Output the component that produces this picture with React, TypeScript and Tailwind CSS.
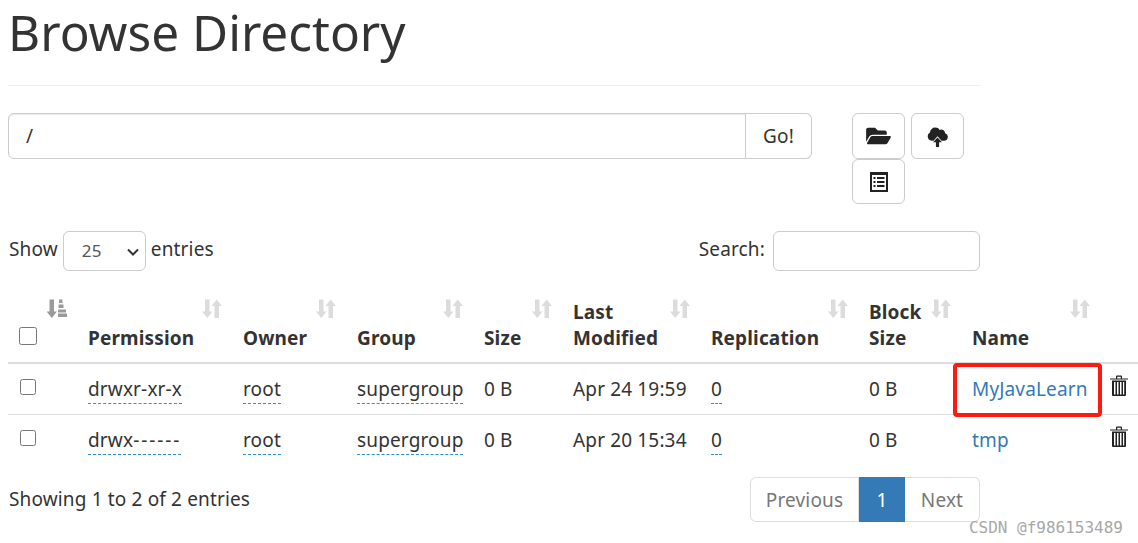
import type { ReactNode } from 'react';
import { FaFolderOpen } from 'react-icons/fa';

const font = "[font-family:'Noto_Sans',sans-serif]";

function SortIcon({ active }: { active?: boolean }) {
	return (
		<svg viewBox="0 0 20 20" className="absolute top-[8px] right-[13px] h-[21px] w-5" fill={active ? '#9a9a9a' : '#dcdcdc'}>
			{active ? (
				<>
					<path d="M2.500 1h4.500v12h3l-5.200 6.500L-.5 13h3z" />
					<path d="M12 1h3.500v3.500H12zM11.500 6h5v3.500h-5zM11 11h8v3h-8zM11 15h9v3.500h-9z" />
				</>
			) : (
				<>
					<path d="M3 1h4.500v12h3l-5.200 6.500L0 13h3z" />
					<path d="M12.500 19.500H17V7.500h3L14.700 1 9.500 7.500h3z" />
				</>
			)}
		</svg>
	);
}

function CloudUpload() {
	return (
		<svg viewBox="0 0 20 20" className="h-[21px] w-[21px]" fill="#222">
			<path d="M4.500 14A4.200 4.200 0 0 1 2.800 6.200 5 5 0 0 1 8 1.500c1.700 0 3.100.8 3.900 2.200A3.800 3.800 0 0 1 17.300 6.800 3.700 3.700 0 0 1 16 14h-2.200L10 9.800 6.200 14z" />
			<path d="M10 11l4.200 4.500h-2.700V20h-3v-4.500H5.800z" />
		</svg>
	);
}

function ListAlt() {
	return (
		<svg viewBox="0 0 18 20" className="h-5 w-[18px]">
			<path fill="#222" fillRule="evenodd" d="M0 0h18v20H0zM2 3v15h14V3z" />
			<path fill="#222" d="M3.500 5h2v2h-2zM7 5h7.500v2H7zM3.500 9h2v2h-2zM7 9h7.500v2H7zM3.500 13h2v2h-2zM7 13h7.500v2H7z" />
		</svg>
	);
}

function Trash() {
	return (
		<svg viewBox="0 0 18 21" className="-mt-[6px] -ml-[1px] h-[21px] w-[18px]" fill="#222">
			<path d="M0 3.500h18v1H0zM6 3.500V1.500Q6 .5 7 .5h4q1 0 1 1v2h-1.200V1.700H7.200v1.800z" />
			<path fillRule="evenodd" d="M2 5.500h14V20a1 1 0 0 1-1 1H3a1 1 0 0 1-1-1zM4 7v12.500h1.500V7zM7 7v12.500h1.500V7zM10 7v12.500h1.500V7zM13 7v12.500h1.200V7z" />
		</svg>
	);
}

const headers = [
	{ label: 'Permission' },
	{ label: 'Owner' },
	{ label: 'Group' },
	{ label: 'Size' },
	{ label: 'Last Modified', wrap: true },
	{ label: 'Replication' },
	{ label: 'Block Size', wrap: true },
	{ label: 'Name' },
];

const rows = [
	{ perm: <>drwxr-xr-x</>, date: 'Apr 24 19:59', name: 'MyJavaLearn', marked: true },
	{ perm: <>drwx<span className="tracking-[1.9px]">------</span></>, date: 'Apr 20 15:34', name: 'tmp' },
];

function Dotted({ children }: { children: ReactNode }) {
	return <span className="border-b border-dashed border-[#2a8fd6] pb-[1px]">{children}</span>;
}

export default function App() {
	return (
		<div className={`${font} relative h-[543px] w-[1138px] overflow-hidden bg-white pl-2 text-[19px] leading-[26px] tracking-[0.15px] text-[#333]`}>
			<div className="w-[972px]">
				<h1 className="border-b border-[#eee] pb-[21px] text-[49.500px] leading-[64px] font-normal tracking-normal">Browse Directory</h1>
				<div className="mt-[27px] flex items-start">
					<div className="flex w-[804px]">
						<div className="h-[46px] flex-1 rounded-l-md border border-[#ccc] pl-[17px] leading-[44px] shadow-[inset_0_1px_1px_rgba(0,0,0,0.075)]">/</div>
						<button className="h-[46px] w-[66px] rounded-r-md border border-l-0 border-[#ccc]">Go!</button>
					</div>
					<div className="ml-10 flex w-[120px] flex-wrap gap-x-[6px]">
						<button className="flex h-[46px] w-[53px] items-center justify-center rounded-md border border-[#ccc]">
							<FaFolderOpen className="h-[22px] w-[25px] text-[#222]" />
						</button>
						<button className="flex h-[46px] w-[53px] items-center justify-center rounded-md border border-[#ccc]">
							<CloudUpload />
						</button>
						<button className="flex h-[45px] w-[53px] items-center justify-center rounded-md border border-[#ccc]">
							<ListAlt />
						</button>
					</div>
				</div>
				<div className="mt-[27px] flex items-center justify-between">
					<div className="-mt-[4px] flex items-center pl-px">
						<span>Show</span>
						<div className="relative top-[2px] mx-[5px] flex h-10 w-[83px] items-center rounded-md border border-[#ccc] pl-[18px] text-[17px] text-[#555]">
							25
							<svg viewBox="0 0 12 8" className="absolute right-[6px] top-[16px] h-2 w-3" fill="none" stroke="#333" strokeWidth="2">
								<path d="M1 1.500l5 5 5-5" />
							</svg>
						</div>
						<span>entries</span>
					</div>
					<div className="flex items-center">
						<span className="relative -top-[2px]">Search:</span>
						<div className="ml-2 h-10 w-[207px] rounded-md border border-[#ccc]" />
					</div>
				</div>
			</div>
			<table className="mt-[19px] w-[1130px] table-fixed border-collapse">
				<colgroup>
					<col className="w-[72px]" />
					<col className="w-[155px]" />
					<col className="w-[114px]" />
					<col className="w-[127px]" />
					<col className="w-[89px]" />
					<col className="w-[138px]" />
					<col className="w-[158px]" />
					<col className="w-[103px]" />
					<col className="w-[139px]" />
					<col className="w-[35px]" />
				</colgroup>
				<thead>
					<tr className="h-[73px] border-b-2 border-[#ddd]">
						<th className="relative px-2 pb-[17px] text-left align-bottom">
							<SortIcon active />
							<input type="checkbox" className="ml-[3px] block h-[18px] w-[18px]" />
						</th>
						{headers.map(h => (
							<th key={h.label} className="relative px-2 pb-[11px] text-left align-bottom font-bold">
								<SortIcon />
								{h.wrap ? (
									<span className="block w-[60px]">{h.label}</span>
								) : (
									h.label
								)}
							</th>
						))}
						<th />
					</tr>
				</thead>
				<tbody>
					{rows.map((r, i) => (
						<tr key={r.name} className={i === 0 ? 'h-[51px] border-b border-[#ddd]' : 'h-[51px]'}>
							<td className="px-2">
								<input type="checkbox" className="relative -top-[2px] ml-[4px] block h-4 w-4" />
							</td>
							<td className="px-2"><Dotted>{r.perm}</Dotted></td>
							<td className="px-2"><Dotted>root</Dotted></td>
							<td className="px-2"><Dotted>supergroup</Dotted></td>
							<td className="px-2">0 B</td>
							<td className="px-2">{r.date}</td>
							<td className="px-2"><Dotted>0</Dotted></td>
							<td className="px-2">0 B</td>
							<td className="relative px-2 text-[#337ab7]">
								{r.name}
								{r.marked && (
									<div className="absolute -top-[1px] left-[-11px] h-[54px] w-[149px] rounded-[4px] border-4 border-[#ff1a10]" />
								)}
							</td>
							<td className="px-2"><Trash /></td>
						</tr>
					))}
				</tbody>
			</table>
			<div className="mt-[12px] flex w-[972px] items-center justify-between">
				<span className="relative -top-[1px] left-px">Showing 1 to 2 of 2 entries</span>
				<div className="flex h-[45px] items-stretch">
					<div className="flex w-[109px] items-center justify-center rounded-l-md border border-[#ddd] text-[#777]">Previous</div>
					<div className="flex w-[46px] items-center justify-center bg-[#337ab7] text-white">1</div>
					<div className="flex w-[75px] items-center justify-center rounded-r-md border border-l-0 border-[#ddd] text-[#777]">Next</div>
				</div>
			</div>
			<span className="absolute right-[15px] top-[519px] font-['DejaVu_Sans_Mono',monospace] text-[16px] leading-[18px] tracking-normal text-[#a8a8a8]">CSDN @f986153489</span>
		</div>
	);
}
